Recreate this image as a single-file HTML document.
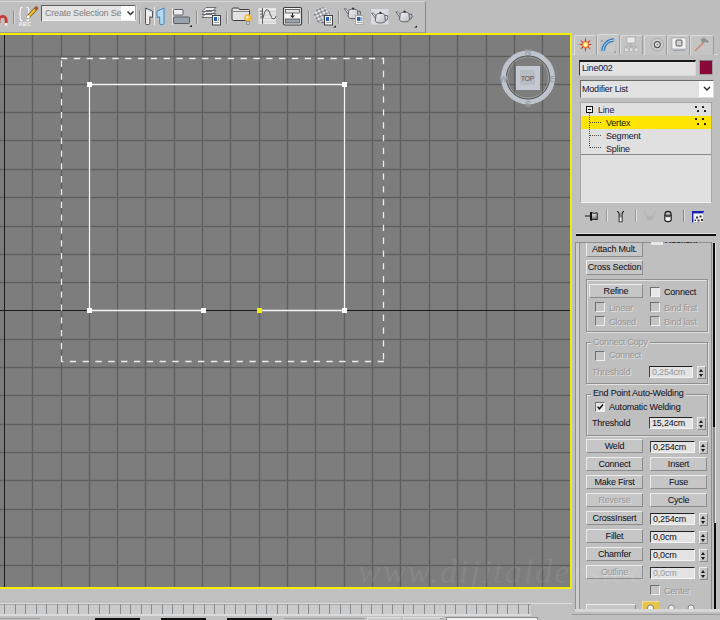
<!DOCTYPE html>
<html><head><meta charset="utf-8"><title>3ds Max</title><style>
*{box-sizing:border-box}
html,body{margin:0;padding:0}
body{width:720px;height:620px;overflow:hidden;position:relative;background:#c2c2c2;font-family:"Liberation Sans",sans-serif;font-size:9px;color:#14141e;letter-spacing:-0.2px;-webkit-text-stroke:0.05px currentColor}
.a{position:absolute}
svg text{-webkit-text-stroke:0}
.btn{position:absolute;height:14px;background:#c6c6c6;border-top:1px solid #ececec;border-left:1px solid #ececec;border-right:1px solid #8c8c8c;border-bottom:1px solid #8c8c8c;text-align:center;line-height:13px;white-space:nowrap}
.dis{color:#9a9a9a;text-shadow:1px 1px 0 #e0e0e0}
.fld{position:absolute;height:12px;background:#e4e4e4;border-top:1px solid #202020;border-left:1px solid #404040;border-right:1px solid #f4f4f4;border-bottom:1px solid #f4f4f4;line-height:10px;padding-left:2px;white-space:nowrap}
.spn{position:absolute;width:9px;height:13px;background:#c6c6c6;border-top:1px solid #ececec;border-left:1px solid #ececec;border-right:1px solid #8c8c8c;border-bottom:1px solid #8c8c8c}
.spn:before{content:"";position:absolute;left:1px;top:2px;border-left:2.5px solid transparent;border-right:2.5px solid transparent;border-bottom:3px solid #1a1a1a}
.spn:after{content:"";position:absolute;left:1px;top:7px;border-left:2.5px solid transparent;border-right:2.5px solid transparent;border-top:3px solid #1a1a1a}
.chk{position:absolute;width:10px;height:10px;background:#c4c4c4;border-top:1px solid #707070;border-left:1px solid #707070;border-right:1px solid #eeeeee;border-bottom:1px solid #eeeeee}
.grp{position:absolute;border:1px solid #8e8e8e;box-shadow:1px 1px 0 #e2e2e2, inset 1px 1px 0 #e2e2e2}
.txt{position:absolute;white-space:nowrap;line-height:11px}
.tab{background:#c4c4c4;border-top:1px solid #dadada;border-left:1px solid #dadada;border-right:1px solid #9c9c9c;border-radius:3px 3px 0 0}
.act{background:#c8c8c8}
</style></head><body>
<!-- top toolbar area -->
<div class="a" style="left:0;top:0;width:720px;height:33px;background:#bdbdbd"></div>
<div class="a" style="left:0;top:1px;width:426px;height:32px;background:#bfbfbf;border-top:1px solid #d6d6d6;border-right:1px solid #8a8a8a;border-bottom:1px solid #9a9a9a"></div>
<svg class="a" style="left:0;top:0" width="426" height="33" viewBox="0 0 426 33">
 <!-- magnet -->
 <path d="M-1 25V20A3.6 3.6 0 0 1 6.2 20V25" fill="none" stroke="#c83a3a" stroke-width="2.8"/>
 <rect x="-2.4" y="23" width="2.8" height="2.5" fill="#f0f0f0"/><rect x="4.8" y="23" width="2.8" height="2.5" fill="#f0f0f0"/>
 <rect x="13" y="11" width="1" height="13" fill="#8c8c8c"/><rect x="14" y="11" width="1" height="13" fill="#d8d8d8"/>
 <!-- braces ABC pencil -->
 <path d="M22.5 7.2Q20.2 7.2 20.2 9.5V12.3Q20.2 13.9 18.9 14Q20.2 14.1 20.2 15.7V18.5Q20.2 20.8 22.5 20.8M26.5 7.2Q28.8 7.2 28.8 9.5V12.3Q28.8 13.9 30.1 14Q28.8 14.1 28.8 15.7V18.5Q28.8 20.8 26.5 20.8" fill="none" stroke="#fafafa" stroke-width="1.1"/>
 <text x="25" y="25.8" font-size="5.4" font-weight="bold" text-anchor="middle" fill="#f6f6f6" font-family="Liberation Sans" letter-spacing="0.4">ABC</text>
 <path d="M28 17L35.5 9" stroke="#6a5010" stroke-width="3.6" stroke-linecap="round"/>
 <path d="M28 17L35.5 9" stroke="#f0c030" stroke-width="2.4"/>
 <path d="M35 9.5L37.5 7" stroke="#a05a30" stroke-width="3.4"/>
 <path d="M27 18L29 16" stroke="#f8f8f8" stroke-width="2.6"/>
 <!-- create selection set field -->
 <rect x="41.5" y="5.5" width="94" height="15" fill="#e4e4e4" stroke="#5c5c5c" stroke-width="1"/>
 <path d="M42 20.5H136V5" stroke="#f0f0f0" stroke-width="1" fill="none"/>
 <rect x="121" y="6" width="14" height="14" fill="#ffffff"/>
 <path d="M127.5 11.5L130.5 14.5L133.5 11.5" stroke="#303030" stroke-width="1.5" fill="none"/>
 <text x="45" y="16.2" font-size="9" fill="#808080" font-family="Liberation Sans" letter-spacing="-0.2">Create Selection Se</text>
 <rect x="139" y="10" width="1" height="14" fill="#8c8c8c"/><rect x="140" y="10" width="1" height="14" fill="#d8d8d8"/>
 <!-- mirror -->
 <path d="M145.5 8L152.5 11.2V17.5L149.8 16.8V23.3Q149.8 24.6 148.5 24.6H146.8Q145.5 24.6 145.5 23.3Z" fill="#ececec" stroke="#505458" stroke-width="1"/>
 <rect x="154" y="7" width="1" height="18" fill="#e8e8e8"/>
 <path d="M164 8L157 11.2V17.5L159.7 16.8V23.3Q159.7 24.6 161 24.6H162.7Q164 24.6 164 23.3Z" fill="#b4d8f0" stroke="#3a86c6" stroke-width="1"/>
 <!-- align -->
 <rect x="172" y="8" width="1" height="17" fill="#e8e8e8"/>
 <rect x="173.5" y="9.5" width="9.5" height="5.5" rx="1" fill="#eeeeee" stroke="#50545a" stroke-width="0.9"/>
 <rect x="173.5" y="17" width="16" height="6.5" rx="1" fill="#9ca2ac" stroke="#50545a" stroke-width="0.9"/>
 <path d="M189 27L192 25L192 27Z" fill="#202020"/>
 <rect x="196" y="11" width="1" height="13" fill="#8c8c8c"/><rect x="197" y="11" width="1" height="13" fill="#d8d8d8"/>
 <!-- layers -->
 <path d="M202 17.5L206 13.5H216L212 17.5Z M202 14.5L206 10.5H216L212 14.5Z M202 11.5L206 7.5H216L212 11.5Z" fill="#eeeeee" stroke="#50545a" stroke-width="0.8"/>
 <rect x="212.5" y="15.5" width="8" height="9.5" fill="#f4f4f4" stroke="#303438" stroke-width="0.9"/>
 <rect x="214" y="17" width="3" height="4" fill="#2a62b0"/>
 <path d="M218.5 17V21M214 22.5H219" stroke="#808080" stroke-width="0.7"/>
 <rect x="226" y="11" width="1" height="13" fill="#8c8c8c"/><rect x="227" y="11" width="1" height="13" fill="#d8d8d8"/>
 <!-- scene explorer -->
 <path d="M232 9.5Q232 8 233.5 8H238.5L239.5 9.5H248.5Q249.5 9.5 249.5 10.5V19Q249.5 20.5 248 20.5H233.5Q232 20.5 232 19Z" fill="#e2e2e2" stroke="#3a3c40" stroke-width="1"/>
 <path d="M233 11.5H249" stroke="#707070" stroke-width="0.8"/>
 <circle cx="248" cy="18" r="3.4" fill="#f6c848" stroke="#d89a20" stroke-width="0.6"/>
 <circle cx="247.3" cy="17.2" r="1.2" fill="#fff4c0"/>
 <rect x="246.5" y="21.5" width="3" height="3" fill="#c8c8c8" stroke="#707070" stroke-width="0.5"/>
 <!-- curve editor -->
 <rect x="258.5" y="8" width="17.5" height="16" fill="#e6e6e6"/>
 <path d="M259 11.5H276M259 15H276M259 18.5H276M259 22H276" stroke="#c4c4c4" stroke-width="0.7"/>
 <rect x="262" y="8" width="1" height="16" fill="#606060"/>
 <path d="M260 11H262M260 14H262M260 17H262" stroke="#404040" stroke-width="0.8"/>
 <path d="M263 18Q265 9.5 267 9.5Q269 9.5 270.5 15Q272 20 274 19Q275.5 18.5 276 16" fill="none" stroke="#505050" stroke-width="0.9"/>
 <!-- schematic -->
 <rect x="283.5" y="7.5" width="18" height="17.5" rx="1.5" fill="#f4f4f4" stroke="#3a3c40" stroke-width="1.2"/>
 <rect x="285.5" y="9.5" width="14" height="3.5" fill="#e4e4e4" stroke="#4a4c50" stroke-width="0.8"/>
 <rect x="285.5" y="19" width="14" height="4" fill="#9ca2ac" stroke="#4a4c50" stroke-width="0.8"/>
 <path d="M292.5 13V17.5" stroke="#202020" stroke-width="1"/>
 <path d="M290 15.5H295L292.5 18Z" fill="#202020"/>
 <rect x="308" y="11" width="1" height="13" fill="#8c8c8c"/><rect x="309" y="11" width="1" height="13" fill="#d8d8d8"/>
 <!-- material editor -->
 <defs><pattern id="chk" width="5" height="5" patternUnits="userSpaceOnUse" patternTransform="rotate(20)"><rect width="5" height="5" fill="#eeeeee"/><rect width="2.5" height="2.5" fill="#7c828c"/><rect x="2.5" y="2.5" width="2.5" height="2.5" fill="#7c828c"/></pattern><radialGradient id="shd" cx="0.4" cy="0.35" r="0.65"><stop offset="0.5" stop-color="#fff" stop-opacity="0"/><stop offset="1" stop-color="#505460" stop-opacity="0.55"/></radialGradient></defs>
 <circle cx="322" cy="15.3" r="8" fill="url(#chk)"/>
 <circle cx="322" cy="15.3" r="8" fill="url(#shd)"/>
 <rect x="324.5" y="15.5" width="8" height="9.5" fill="#f4f4f4" stroke="#303438" stroke-width="0.9"/>
 <rect x="326" y="17" width="3" height="4" fill="#2a62b0"/>
 <path d="M330.5 17V21M326 22.5H331" stroke="#808080" stroke-width="0.7"/>
 <path d="M333 27.5L336 25.5L336 27.5Z" fill="#202020"/>
 <rect x="338" y="11" width="1" height="13" fill="#8c8c8c"/><rect x="339" y="11" width="1" height="13" fill="#d8d8d8"/>
 <!-- teapots -->
 <defs>
  <linearGradient id="tpg" x1="0" y1="0" x2="1" y2="1"><stop offset="0" stop-color="#f4f5f7"/><stop offset="1" stop-color="#b8bcc4"/></linearGradient>
  <g id="teapot">
   <path d="M0.8 2.2L5.5 8.8L6.3 6L2.6 2.4Z" fill="url(#tpg)" stroke="#50545a" stroke-width="0.8" stroke-linejoin="round"/>
   <path d="M14 4.6Q17.6 3.8 17.2 6.8Q16.8 9.4 14.2 10.2" fill="none" stroke="#50545a" stroke-width="0.9"/>
   <path d="M5.2 5Q5.2 2.6 9.6 2.6Q14 2.6 14 5L14.6 9.6Q14.6 12.2 9.6 12.2Q4.6 12.2 4.6 9.6Z" fill="url(#tpg)" stroke="#50545a" stroke-width="0.9"/>
   <circle cx="9.6" cy="2.1" r="1.1" fill="#303030"/>
  </g>
 </defs>
 <use href="#teapot" x="343.5" y="6.5"/>
 <rect x="355.5" y="15.5" width="7.5" height="9" fill="#f4f4f4" stroke="#9a9a9a" stroke-width="0.7"/>
 <rect x="357" y="17" width="3.5" height="4" fill="#2a62b0"/>
 <path d="M361.5 17V21M357 22.5H362" stroke="#808080" stroke-width="0.7"/>
 <rect x="371" y="9" width="17.5" height="15.5" fill="#d8dce0"/>
 <use href="#teapot" x="370.8" y="10.8"/>
 <use href="#teapot" x="395" y="9.6"/>
 <path d="M414 27.5L417 25.5L417 27.5Z" fill="#202020"/>
</svg>
<!-- viewport -->
<svg class="a" style="left:0;top:0" width="572" height="589" viewBox="0 0 572 589">
<rect x="0" y="35" width="570" height="552" fill="#7d7d7d"/>
<rect x="31" y="35" width="3" height="552" fill="#777777"/>
<rect x="60" y="35" width="3" height="552" fill="#777777"/>
<rect x="88" y="35" width="3" height="552" fill="#777777"/>
<rect x="116" y="35" width="3" height="552" fill="#777777"/>
<rect x="144" y="35" width="3" height="552" fill="#777777"/>
<rect x="173" y="35" width="3" height="552" fill="#777777"/>
<rect x="201" y="35" width="3" height="552" fill="#777777"/>
<rect x="229" y="35" width="3" height="552" fill="#777777"/>
<rect x="258" y="35" width="3" height="552" fill="#777777"/>
<rect x="286" y="35" width="3" height="552" fill="#777777"/>
<rect x="314" y="35" width="3" height="552" fill="#777777"/>
<rect x="343" y="35" width="3" height="552" fill="#777777"/>
<rect x="371" y="35" width="3" height="552" fill="#777777"/>
<rect x="399" y="35" width="3" height="552" fill="#777777"/>
<rect x="428" y="35" width="3" height="552" fill="#777777"/>
<rect x="456" y="35" width="3" height="552" fill="#777777"/>
<rect x="485" y="35" width="3" height="552" fill="#777777"/>
<rect x="513" y="35" width="3" height="552" fill="#777777"/>
<rect x="541" y="35" width="3" height="552" fill="#777777"/>
<rect x="0" y="55" width="570" height="3" fill="#777777"/>
<rect x="0" y="83" width="570" height="3" fill="#777777"/>
<rect x="0" y="111" width="570" height="3" fill="#777777"/>
<rect x="0" y="139" width="570" height="3" fill="#777777"/>
<rect x="0" y="168" width="570" height="3" fill="#777777"/>
<rect x="0" y="196" width="570" height="3" fill="#777777"/>
<rect x="0" y="225" width="570" height="3" fill="#777777"/>
<rect x="0" y="253" width="570" height="3" fill="#777777"/>
<rect x="0" y="281" width="570" height="3" fill="#777777"/>
<rect x="0" y="338" width="570" height="3" fill="#777777"/>
<rect x="0" y="366" width="570" height="3" fill="#777777"/>
<rect x="0" y="394" width="570" height="3" fill="#777777"/>
<rect x="0" y="423" width="570" height="3" fill="#777777"/>
<rect x="0" y="451" width="570" height="3" fill="#777777"/>
<rect x="0" y="479" width="570" height="3" fill="#777777"/>
<rect x="0" y="508" width="570" height="3" fill="#777777"/>
<rect x="0" y="536" width="570" height="3" fill="#777777"/>
<rect x="0" y="564" width="570" height="3" fill="#777777"/>
<rect x="32" y="35" width="1" height="552" fill="#5f5f5f"/>
<rect x="61" y="35" width="1" height="552" fill="#5f5f5f"/>
<rect x="89" y="35" width="1" height="552" fill="#5f5f5f"/>
<rect x="117" y="35" width="1" height="552" fill="#5f5f5f"/>
<rect x="145" y="35" width="1" height="552" fill="#5f5f5f"/>
<rect x="174" y="35" width="1" height="552" fill="#5f5f5f"/>
<rect x="202" y="35" width="1" height="552" fill="#5f5f5f"/>
<rect x="230" y="35" width="1" height="552" fill="#5f5f5f"/>
<rect x="259" y="35" width="1" height="552" fill="#5f5f5f"/>
<rect x="287" y="35" width="1" height="552" fill="#5f5f5f"/>
<rect x="315" y="35" width="1" height="552" fill="#5f5f5f"/>
<rect x="344" y="35" width="1" height="552" fill="#5f5f5f"/>
<rect x="372" y="35" width="1" height="552" fill="#5f5f5f"/>
<rect x="400" y="35" width="1" height="552" fill="#5f5f5f"/>
<rect x="429" y="35" width="1" height="552" fill="#5f5f5f"/>
<rect x="457" y="35" width="1" height="552" fill="#5f5f5f"/>
<rect x="486" y="35" width="1" height="552" fill="#5f5f5f"/>
<rect x="514" y="35" width="1" height="552" fill="#5f5f5f"/>
<rect x="542" y="35" width="1" height="552" fill="#5f5f5f"/>
<rect x="0" y="56" width="570" height="1" fill="#5f5f5f"/>
<rect x="0" y="84" width="570" height="1" fill="#5f5f5f"/>
<rect x="0" y="112" width="570" height="1" fill="#5f5f5f"/>
<rect x="0" y="140" width="570" height="1" fill="#5f5f5f"/>
<rect x="0" y="169" width="570" height="1" fill="#5f5f5f"/>
<rect x="0" y="197" width="570" height="1" fill="#5f5f5f"/>
<rect x="0" y="226" width="570" height="1" fill="#5f5f5f"/>
<rect x="0" y="254" width="570" height="1" fill="#5f5f5f"/>
<rect x="0" y="282" width="570" height="1" fill="#5f5f5f"/>
<rect x="0" y="339" width="570" height="1" fill="#5f5f5f"/>
<rect x="0" y="367" width="570" height="1" fill="#5f5f5f"/>
<rect x="0" y="395" width="570" height="1" fill="#5f5f5f"/>
<rect x="0" y="424" width="570" height="1" fill="#5f5f5f"/>
<rect x="0" y="452" width="570" height="1" fill="#5f5f5f"/>
<rect x="0" y="480" width="570" height="1" fill="#5f5f5f"/>
<rect x="0" y="509" width="570" height="1" fill="#5f5f5f"/>
<rect x="0" y="537" width="570" height="1" fill="#5f5f5f"/>
<rect x="0" y="565" width="570" height="1" fill="#5f5f5f"/>
<rect x="4" y="35" width="1" height="552" fill="#1c1c1c"/>
<rect x="0" y="310" width="570" height="1" fill="#1c1c1c"/>
<rect x="0" y="33" width="572" height="2" fill="#f2ee00"/>
<rect x="0" y="587" width="572" height="2" fill="#f2ee00"/>
<rect x="570" y="33" width="2" height="556" fill="#f2ee00"/>
<path d="M61 58.5H384" fill="none" stroke="#ececec" stroke-width="1.3" stroke-dasharray="6.3 6.53"/>
<path d="M383.5 58V362" fill="none" stroke="#ececec" stroke-width="1.3" stroke-dasharray="6.3 6.53"/>
<path d="M384 361.5H61" fill="none" stroke="#ececec" stroke-width="1.3" stroke-dasharray="6.3 6.53"/>
<path d="M61.5 362V58" fill="none" stroke="#ececec" stroke-width="1.3" stroke-dasharray="6.3 6.53"/>
<path d="M259 310.5H344.5V84.5H89.5V310.5H203" fill="none" stroke="#f4f4f4" stroke-width="1.3"/>
<rect x="87" y="308" width="5" height="5" fill="#fff"/>
<rect x="342" y="308" width="5" height="5" fill="#fff"/>
<rect x="87" y="82" width="5" height="5" fill="#fff"/>
<rect x="342" y="82" width="5" height="5" fill="#fff"/>
<rect x="201" y="308" width="5" height="5" fill="#fff"/>
<rect x="257" y="308" width="5" height="5" fill="#f2ee00"/>
<circle cx="528" cy="77.5" r="24.5" fill="none" stroke="#bfc3cb" stroke-width="5"/>
<circle cx="528" cy="77.5" r="21.5" fill="none" stroke="#4a4e58" stroke-width="0.9"/><circle cx="528" cy="77.5" r="20.6" fill="none" stroke="#b8b8b0" stroke-width="0.6"/>
<rect x="516" y="66" width="24" height="24" fill="#c4c8d0"/>
<rect x="520" y="70" width="15" height="15" fill="#b8bcc4"/>
<text x="527.5" y="80.5" font-size="7" text-anchor="middle" fill="#50545c" font-family="Liberation Sans">TOP</text>
<text x="528" y="55" font-size="8.5" font-weight="bold" text-anchor="middle" fill="#9aa0ac" font-family="Liberation Sans">N</text>
<text x="528" y="107" font-size="8.5" font-weight="bold" text-anchor="middle" fill="#9aa0ac" font-family="Liberation Sans">S</text>
<text x="503.5" y="81.5" font-size="8.5" font-weight="bold" text-anchor="middle" fill="#9aa0ac" font-family="Liberation Sans">W</text>
<text x="552" y="81.5" font-size="8.5" font-weight="bold" text-anchor="middle" fill="#9aa0ac" font-family="Liberation Sans">E</text>
</svg>
<!-- bottom strip -->
<div class="a" style="left:0;top:589px;width:572px;height:31px;background:#c0c0c0"></div>
<div class="a" style="left:0;top:603px;width:572px;height:1px;background:#dedede"></div>
<div class="a" style="left:0;top:604px;width:531px;height:10px;background:#cbcbcb;border-top:1px solid #a8a8a8"></div>
<div class="a" style="left:0;top:614px;width:531px;height:2px;background:#dadada"></div>
<div class="a" style="left:4px;top:604px;width:1px;height:10px;background:#858a8e"></div>
<div class="a" style="left:15px;top:604px;width:1px;height:10px;background:#858a8e"></div>
<div class="a" style="left:25px;top:604px;width:1px;height:10px;background:#858a8e"></div>
<div class="a" style="left:36px;top:604px;width:1px;height:10px;background:#858a8e"></div>
<div class="a" style="left:46px;top:604px;width:1px;height:10px;background:#858a8e"></div>
<div class="a" style="left:57px;top:604px;width:1px;height:10px;background:#858a8e"></div>
<div class="a" style="left:67px;top:604px;width:1px;height:10px;background:#858a8e"></div>
<div class="a" style="left:78px;top:604px;width:1px;height:10px;background:#858a8e"></div>
<div class="a" style="left:88px;top:604px;width:1px;height:10px;background:#858a8e"></div>
<div class="a" style="left:99px;top:604px;width:1px;height:10px;background:#858a8e"></div>
<div class="a" style="left:109px;top:604px;width:1px;height:10px;background:#858a8e"></div>
<div class="a" style="left:120px;top:604px;width:1px;height:10px;background:#858a8e"></div>
<div class="a" style="left:130px;top:604px;width:1px;height:10px;background:#858a8e"></div>
<div class="a" style="left:141px;top:604px;width:1px;height:10px;background:#858a8e"></div>
<div class="a" style="left:151px;top:604px;width:1px;height:10px;background:#858a8e"></div>
<div class="a" style="left:162px;top:604px;width:1px;height:10px;background:#858a8e"></div>
<div class="a" style="left:172px;top:604px;width:1px;height:10px;background:#858a8e"></div>
<div class="a" style="left:183px;top:604px;width:1px;height:10px;background:#858a8e"></div>
<div class="a" style="left:193px;top:604px;width:1px;height:10px;background:#858a8e"></div>
<div class="a" style="left:204px;top:604px;width:1px;height:10px;background:#858a8e"></div>
<div class="a" style="left:214px;top:604px;width:1px;height:10px;background:#858a8e"></div>
<div class="a" style="left:224px;top:604px;width:1px;height:10px;background:#858a8e"></div>
<div class="a" style="left:235px;top:604px;width:1px;height:10px;background:#858a8e"></div>
<div class="a" style="left:245px;top:604px;width:1px;height:10px;background:#858a8e"></div>
<div class="a" style="left:256px;top:604px;width:1px;height:10px;background:#858a8e"></div>
<div class="a" style="left:266px;top:604px;width:1px;height:10px;background:#858a8e"></div>
<div class="a" style="left:277px;top:604px;width:1px;height:10px;background:#858a8e"></div>
<div class="a" style="left:287px;top:604px;width:1px;height:10px;background:#858a8e"></div>
<div class="a" style="left:298px;top:604px;width:1px;height:10px;background:#858a8e"></div>
<div class="a" style="left:308px;top:604px;width:1px;height:10px;background:#858a8e"></div>
<div class="a" style="left:319px;top:604px;width:1px;height:10px;background:#858a8e"></div>
<div class="a" style="left:329px;top:604px;width:1px;height:10px;background:#858a8e"></div>
<div class="a" style="left:340px;top:604px;width:1px;height:10px;background:#858a8e"></div>
<div class="a" style="left:350px;top:604px;width:1px;height:10px;background:#858a8e"></div>
<div class="a" style="left:361px;top:604px;width:1px;height:10px;background:#858a8e"></div>
<div class="a" style="left:371px;top:604px;width:1px;height:10px;background:#858a8e"></div>
<div class="a" style="left:382px;top:604px;width:1px;height:10px;background:#858a8e"></div>
<div class="a" style="left:392px;top:604px;width:1px;height:10px;background:#858a8e"></div>
<div class="a" style="left:403px;top:604px;width:1px;height:10px;background:#858a8e"></div>
<div class="a" style="left:413px;top:604px;width:1px;height:10px;background:#858a8e"></div>
<div class="a" style="left:424px;top:604px;width:1px;height:10px;background:#858a8e"></div>
<div class="a" style="left:434px;top:604px;width:1px;height:10px;background:#858a8e"></div>
<div class="a" style="left:445px;top:604px;width:1px;height:10px;background:#858a8e"></div>
<div class="a" style="left:455px;top:604px;width:1px;height:10px;background:#858a8e"></div>
<div class="a" style="left:466px;top:604px;width:1px;height:10px;background:#858a8e"></div>
<div class="a" style="left:476px;top:604px;width:1px;height:10px;background:#858a8e"></div>
<div class="a" style="left:486px;top:604px;width:1px;height:10px;background:#858a8e"></div>
<div class="a" style="left:497px;top:604px;width:1px;height:10px;background:#858a8e"></div>
<div class="a" style="left:507px;top:604px;width:1px;height:10px;background:#858a8e"></div>
<div class="a" style="left:518px;top:604px;width:1px;height:10px;background:#858a8e"></div>
<div class="a" style="left:528px;top:604px;width:1px;height:10px;background:#858a8e"></div>
<div class="a" style="left:0;top:618px;width:40px;height:1px;background:#9c9c9c"></div>
<div class="a" style="left:95px;top:618px;width:45px;height:2px;background:#101010"></div>
<div class="a" style="left:161px;top:618px;width:45px;height:2px;background:#101010"></div>
<div class="a" style="left:227px;top:618px;width:45px;height:2px;background:#101010"></div>
<div class="a" style="left:284px;top:618px;width:80px;height:1px;background:#9c9c9c"></div>
<div class="a" style="left:367px;top:617px;width:34px;height:3px;border-top:1px solid #e0e0e0;border-left:1px solid #e0e0e0;background:#c8c8c8"></div>
<div class="a" style="left:403px;top:617px;width:40px;height:3px;border-top:1px solid #e0e0e0;border-left:1px solid #e0e0e0;background:#c8c8c8"></div>
<div class="a" style="left:440px;top:618px;width:3px;height:1px;background:#9c9c9c"></div>
<div class="a" style="left:446px;top:617px;width:92px;height:3px;border-top:1px solid #8a8a8a;border-left:1px solid #8a8a8a;border-right:1px solid #8a8a8a;background:#f0f0f0"></div>

<!-- command panel -->
<div class="a" style="left:572px;top:33px;width:148px;height:587px;background:#bfbfbf"></div>
<!-- tabs -->
<div class="a" style="left:572px;top:54px;width:146px;height:1px;background:#dadada"></div>
<div class="a tab" style="left:574px;top:35px;width:23px;height:20px"></div>
<div class="a tab act" style="left:597px;top:34px;width:23px;height:21px"></div>
<div class="a tab" style="left:620px;top:35px;width:23px;height:20px"></div>
<div class="a tab" style="left:644px;top:35px;width:23px;height:20px"></div>
<div class="a tab" style="left:667px;top:35px;width:23px;height:20px"></div>
<div class="a tab" style="left:690px;top:35px;width:24px;height:20px"></div>
<svg class="a" style="left:572px;top:33px" width="148" height="22" viewBox="572 33 148 22">
 <!-- create: sun -->
 <path d="M585.5 37 L586.6 42.5 L591 39.5 L588 43.8 L593 44.6 L588 45.5 L591 49.8 L586.6 46.8 L585.5 52.5 L584.4 46.8 L580 49.8 L583 45.5 L578 44.6 L583 43.8 L580 39.5 L584.4 42.5Z" fill="#cc4028"/>
 <defs><radialGradient id="sung"><stop offset="0" stop-color="#ffffff"/><stop offset="0.35" stop-color="#fff4a0"/><stop offset="0.7" stop-color="#ffb030"/><stop offset="1" stop-color="#e87020" stop-opacity="0"/></radialGradient></defs>
 <circle cx="585.5" cy="44.6" r="3.6" fill="url(#sung)"/>
 <!-- modify: arc -->
 <rect x="601" y="40" width="15" height="13" fill="none" stroke="#b4b4b4" stroke-width="0.6"/>
 <path d="M603 51 A11 11 0 0 1 614 40" fill="none" stroke="#3a7cc0" stroke-width="3.6"/>
 <path d="M603 51 A11 11 0 0 1 614 40" fill="none" stroke="#bcdcf4" stroke-width="1"/>
 <rect x="601" y="40" width="2" height="2" fill="#9aa0a8"/>
 <rect x="614" y="51" width="2" height="2" fill="#9aa0a8"/>
 <!-- hierarchy -->
 <rect x="627" y="37" width="8" height="6" fill="#eaeaea" stroke="#9a9a9a" stroke-width="0.6"/>
 <path d="M631 43V46M626 46H636M626 46V48M631 46V48M636 46V48" stroke="#a8a8a8" stroke-width="0.6" fill="none"/>
 <rect x="624.5" y="48" width="3.5" height="3.5" fill="#e0e0e0" stroke="#a0a0a0" stroke-width="0.5"/>
 <rect x="629.5" y="48" width="3.5" height="3.5" fill="#e0e0e0" stroke="#a0a0a0" stroke-width="0.5"/>
 <rect x="634.5" y="48" width="3.5" height="3.5" fill="#e0e0e0" stroke="#a0a0a0" stroke-width="0.5"/>
 <!-- motion -->
 <circle cx="657.3" cy="44.6" r="6.3" fill="#cdcdcd" stroke="#a4a4a4" stroke-width="0.8"/>
 <circle cx="657.3" cy="44.6" r="4.6" fill="#dedede" stroke="#bdbdbd" stroke-width="0.6"/>
 <circle cx="657.3" cy="44.6" r="3" fill="#f2f2f2" stroke="#555555" stroke-width="1.2"/>
 <circle cx="657.3" cy="44.6" r="1.1" fill="#8a8a8a"/>
 <!-- display -->
 <rect x="672" y="38" width="14" height="11" fill="#f2f2f2" stroke="#9a9a9a" stroke-width="0.6"/>
 <rect x="676" y="40" width="6" height="6" rx="1" fill="#d0d0d0" stroke="#505050" stroke-width="0.9"/>
 <path d="M673 50.5H685" stroke="#9aa4b0" stroke-width="1"/>
 <!-- utilities hammer -->
 <path d="M695 51 L705 41" stroke="#d08870" stroke-width="1.6"/>
 <path d="M700.5 39.5 L704 37.5 L709 41.5 L707.5 43 L705 41.5 L702.5 43.5Z" fill="#8c9096"/>
</svg>
<!-- name field -->
<div class="a" style="left:579px;top:60px;width:117px;height:16px;background:#e2e2e2;border-top:2px solid #1a1a1a;border-left:1px solid #3a3a3a;border-right:1px solid #d8d8d8;border-bottom:1px solid #d8d8d8"></div>
<div class="txt" style="left:582px;top:63px;color:#1c1c50">Line002</div>
<div class="a" style="left:699px;top:60px;width:14px;height:15px;background:#8b083a;border:1px solid #a0a0a0;border-top-color:#7a7a7a"></div>
<!-- modifier list -->
<div class="a" style="left:580px;top:80px;width:134px;height:18px;background:#e2e2e2;border-top:1px solid #6a6a6a;border-left:1px solid #6a6a6a;border-right:1px solid #dcdcdc;border-bottom:1px solid #dcdcdc"></div>
<div class="a" style="left:699px;top:81px;width:14px;height:16px;background:#ffffff"></div>
<svg class="a" style="left:703px;top:86px" width="9" height="6"><path d="M1 1L4 4L7 1" stroke="#303030" stroke-width="1.5" fill="none"/></svg>
<div class="txt" style="left:582px;top:84px;color:#1e1e3c">Modifier List</div>
<!-- stack -->
<div class="a" style="left:580px;top:102px;width:132px;height:101px;background:#e0e0e0;border-top:1px solid #a8a8a8;border-left:1px solid #a8a8a8;border-right:1px solid #a8a8a8;border-bottom:1px solid #f0f0f0"></div>
<div class="a" style="left:581px;top:116px;width:130px;height:13px;background:#ffe500"></div>
<div class="a" style="left:581px;top:154px;width:130px;height:1px;background:#8a8a8a"></div>
<div class="a" style="left:586px;top:106px;width:7px;height:7px;border:1px solid #101010;background:#f0f0f0"></div>
<div class="a" style="left:588px;top:109px;width:3px;height:1px;background:#101010"></div>
<svg class="a" style="left:580px;top:112px" width="30" height="42"><path d="M9.5 1V35.5M10 10.5H22M10 23.5H22M10 35.5H22" stroke="#4a4a4a" stroke-width="1" stroke-dasharray="1 1" fill="none"/></svg>
<div class="txt" style="left:598px;top:105px;color:#2a2a66">Line</div>
<div class="txt" style="left:606px;top:118px;color:#2a2a10">Vertex</div>
<div class="txt" style="left:606px;top:131px;color:#24243a">Segment</div>
<div class="txt" style="left:606px;top:144px;color:#24243a">Spline</div>
<svg class="a" style="left:694px;top:104px" width="16" height="24"><rect x="1" y="2" width="2" height="2" rx="0.6" fill="#141414"/><rect x="8" y="2" width="2" height="2" rx="0.6" fill="#141414"/><rect x="3" y="6" width="2" height="2" rx="0.6" fill="#141414"/><rect x="10" y="6" width="2" height="2" rx="0.6" fill="#141414"/><rect x="1" y="14" width="2" height="2" rx="0.6" fill="#141414"/><rect x="8" y="14" width="2" height="2" rx="0.6" fill="#141414"/><rect x="3" y="19" width="2" height="2" rx="0.6" fill="#141414"/><rect x="10" y="19" width="2" height="2" rx="0.6" fill="#141414"/></svg>
<!-- stack toolbar -->
<svg class="a" style="left:580px;top:205px" width="135" height="24" viewBox="580 205 135 24">
 <defs><linearGradient id="pinb" x1="0" x2="0" y1="0" y2="1"><stop offset="0" stop-color="#f4f4f4"/><stop offset="1" stop-color="#707070"/></linearGradient></defs>
 <path d="M585 216H590.5" stroke="#404040" stroke-width="1.3"/>
 <path d="M590.8 212.5Q594 214 597.2 212.8V219.6Q594 218.6 590.8 220Z" fill="url(#pinb)" stroke="#141414" stroke-width="1"/>
 <rect x="590" y="212" width="2" height="8.5" fill="#141414"/>
 <rect x="606" y="209" width="1" height="13" fill="#9a9a9a"/><rect x="607" y="209" width="1" height="13" fill="#e0e0e0"/>
 <path d="M617.2 211.2Q619 212 619.2 214V221.8H622V214Q622.2 212 624 211.2" fill="none" stroke="#161616" stroke-width="1.1"/>
 <rect x="619.7" y="213.5" width="1.8" height="4" fill="#909090"/>
 <rect x="619.7" y="217.5" width="1.8" height="4" fill="#ffffff"/>
 <rect x="635" y="209" width="1" height="13" fill="#9a9a9a"/><rect x="636" y="209" width="1" height="13" fill="#e0e0e0"/>
 <path d="M644 211.5L650 220.5M655.5 211.5L649.5 220.5" stroke="#b0b0b0" stroke-width="0.9" fill="none"/>
 <circle cx="648.5" cy="218" r="1.6" fill="none" stroke="#a8a8a8" stroke-width="0.7"/><circle cx="651.5" cy="218" r="1.6" fill="none" stroke="#a8a8a8" stroke-width="0.7"/>
 <path d="M665 215.5V214A3 2.6 0 0 1 671 214V215.5" stroke="#141414" stroke-width="1.1" fill="none"/>
 <path d="M664.8 215.2H671.2V219.5Q671.2 221.6 668 221.6Q664.8 221.6 664.8 219.5Z" fill="#f6f6f6" stroke="#141414" stroke-width="1.1"/>
 <rect x="665.3" y="215.6" width="5.4" height="1.6" fill="#505050"/>
 <rect x="683" y="209" width="1" height="13" fill="#8a8a8a"/><rect x="684" y="209" width="1" height="13" fill="#dcdcdc"/>
 <rect x="692" y="211" width="12" height="11.5" fill="#f2f2f2"/>
 <path d="M692.7 222.5V211.7H703.5" stroke="#1a20b0" stroke-width="1.4" fill="none"/>
 <rect x="692" y="211" width="12" height="2.4" fill="#1a20b0"/>
 <path d="M703.5 212V222.5H692.5" stroke="#b4b4b4" stroke-width="0.8" fill="none"/>
 <path d="M696 216.5H698V218.5H696ZM699.5 215.5H701.5V217.5H699.5ZM697.5 219.5H699.5V221.5H697.5ZM701 219H703V221H701ZM694.5 219.5H696V221H694.5Z" fill="#3a3a3a"/>
</svg>
<!-- divider -->
<div class="a" style="left:576px;top:233px;width:140px;height:1px;background:#e0e0e0"></div>
<div class="a" style="left:576px;top:234px;width:140px;height:2px;background:#101010"></div>
<!-- rollout frame -->
<div class="a" style="left:575px;top:242px;width:137px;height:368px;border-top:1px solid #8e8e8e;border-left:1px solid #8e8e8e;border-right:1px solid #8e8e8e"></div>
<div class="a" style="left:576px;top:243px;width:3px;height:366px;background:#cfcfcf"></div>
<div class="a" style="left:579px;top:243px;width:1px;height:366px;background:#8e8e8e"></div>
<div class="a" style="left:575px;top:609px;width:145px;height:3px;background:#d6d6d6"></div>
<div class="a" style="left:572px;top:614px;width:148px;height:1px;background:#9a9a9a"></div>
<!-- scrollbar -->
<div class="a" style="left:713px;top:243px;width:2px;height:184px;background:#0c0c0c"></div>
<div class="a" style="left:713px;top:427px;width:2px;height:96px;background:#8a8a8a"></div>
<div class="a" style="left:715px;top:243px;width:1px;height:367px;background:#e0e0e0"></div>
<div class="a" style="left:714px;top:523px;width:2px;height:86px;background:#0c0c0c"></div>
<!-- rollout content -->
<div class="btn" style="left:586px;top:243px;width:57px;height:14px;border-top:none">Attach Mult.</div>
<div class="a" style="left:651px;top:242px;width:12px;height:3px;background:#e8e8e8"></div>
<div class="txt" style="left:665px;top:242px;height:3px;overflow:hidden;line-height:11px"><span style="position:relative;top:-7px">Reorient</span></div>
<div class="btn" style="left:586px;top:260px;width:57px;height:15px">Cross Section</div>
<div class="grp" style="left:586px;top:279px;width:122px;height:53px"></div>
<div class="btn" style="left:589px;top:284px;width:54px;height:14px">Refine</div>
<div class="chk" style="left:650px;top:287px;background:#e8e8e8"></div>
<div class="txt" style="left:664px;top:287px">Connect</div>
<div class="chk" style="left:595px;top:302px"></div>
<div class="txt dis" style="left:609px;top:303px">Linear</div>
<div class="chk" style="left:650px;top:302px"></div>
<div class="txt dis" style="left:664px;top:303px">Bind first</div>
<div class="chk" style="left:595px;top:316px"></div>
<div class="txt dis" style="left:609px;top:317px">Closed</div>
<div class="chk" style="left:650px;top:316px"></div>
<div class="txt dis" style="left:664px;top:317px">Bind last</div>
<!-- connect copy -->
<div class="grp" style="left:586px;top:342px;width:122px;height:42px"></div>
<div class="txt dis" style="left:591px;top:337px;background:#bfbfbf;padding:0 2px">Connect Copy</div>
<div class="chk" style="left:595px;top:351px"></div>
<div class="txt dis" style="left:609px;top:350px">Connect</div>
<div class="txt dis" style="left:592px;top:367px">Threshold</div>
<div class="fld" style="left:649px;top:366px;width:44px;color:#9a9a9a">0,254cm</div>
<div class="spn" style="left:697px;top:366px"></div>
<!-- end point auto welding -->
<div class="grp" style="left:586px;top:394px;width:122px;height:42px"></div>
<div class="txt" style="left:591px;top:388px;background:#bfbfbf;padding:0 2px">End Point Auto-Welding</div>
<div class="chk" style="left:595px;top:402px;background:#e8e8e8"></div>
<svg class="a" style="left:596px;top:403px" width="9" height="9"><path d="M1.6 3.6L3.4 5.8L7 1.6" stroke="#101010" stroke-width="1.5" fill="none"/></svg>
<div class="txt" style="left:609px;top:402px">Automatic Welding</div>
<div class="txt" style="left:592px;top:418px">Threshold</div>
<div class="fld" style="left:649px;top:417px;width:44px">15,24cm</div>
<div class="spn" style="left:697px;top:417px"></div>
<!-- buttons -->
<div class="btn" style="left:586px;top:439px;width:57px">Weld</div>
<div class="fld" style="left:650px;top:441px;width:45px">0,254cm</div>
<div class="spn" style="left:699px;top:441px"></div>
<div class="btn" style="left:586px;top:457px;width:57px">Connect</div>
<div class="btn" style="left:650px;top:457px;width:57px">Insert</div>
<div class="btn" style="left:586px;top:475px;width:57px">Make First</div>
<div class="btn" style="left:650px;top:475px;width:57px">Fuse</div>
<div class="btn dis" style="left:586px;top:493px;width:57px">Reverse</div>
<div class="btn" style="left:650px;top:493px;width:57px">Cycle</div>
<div class="btn" style="left:586px;top:511px;width:57px">CrossInsert</div>
<div class="fld" style="left:650px;top:513px;width:45px">0,254cm</div>
<div class="spn" style="left:699px;top:513px"></div>
<div class="btn" style="left:586px;top:529px;width:57px">Fillet</div>
<div class="fld" style="left:650px;top:531px;width:45px">0,0cm</div>
<div class="spn" style="left:699px;top:531px"></div>
<div class="btn" style="left:586px;top:547px;width:57px">Chamfer</div>
<div class="fld" style="left:650px;top:549px;width:45px">0,0cm</div>
<div class="spn" style="left:699px;top:549px"></div>
<div class="btn dis" style="left:586px;top:565px;width:57px">Outline</div>
<div class="fld" style="left:650px;top:567px;width:45px;color:#9a9a9a">0,0cm</div>
<div class="spn" style="left:699px;top:567px"></div>
<div class="chk" style="left:650px;top:585px"></div>
<div class="txt dis" style="left:664px;top:586px">Center</div>
<div class="a" style="left:586px;top:604px;width:50px;height:5px;background:#c6c6c6;border-top:1px solid #ececec;border-left:1px solid #ececec;border-right:1px solid #8c8c8c"></div>
<div class="a" style="left:642px;top:601px;width:17px;height:8px;background:#e8c44a;border-top:1px solid #f0e0a0;border-left:1px solid #f0e0a0"></div>
<svg class="a" style="left:645px;top:603px" width="60" height="6"><circle cx="5.5" cy="5" r="3" fill="#fff" stroke="#606060" stroke-width="0.8"/><circle cx="26.5" cy="5" r="3" fill="#ececec" stroke="#707070" stroke-width="0.8"/><circle cx="46" cy="5" r="3" fill="#ececec" stroke="#707070" stroke-width="0.8"/></svg>
<div class="a" style="left:358px;top:552px;font-family:'Liberation Serif',serif;font-style:italic;font-size:34px;letter-spacing:2px;color:rgba(255,255,255,0.07);-webkit-text-stroke:0;white-space:nowrap;line-height:40px">www.dijitalders.com</div>
</body></html>
